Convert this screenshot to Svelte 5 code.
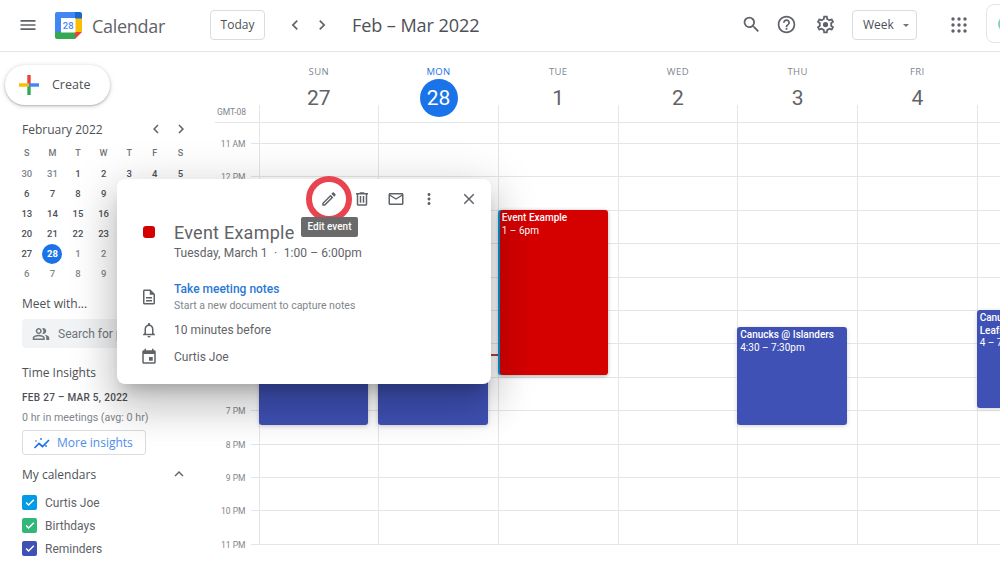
<script lang="ts">
  const ic = {
    menu: 'M3 18h18v-2H3v2zm0-5h18v-2H3v2zm0-7v2h18V6H3z',
    left: 'M15.41 7.41L14 6l-6 6 6 6 1.41-1.41L10.83 12z',
    right: 'M10 6L8.59 7.41 13.17 12l-4.58 4.59L10 18l6-6z',
    search: 'M15.5 14h-.79l-.28-.27A6.471 6.471 0 0 0 16 9.5 6.5 6.5 0 1 0 9.5 16c1.61 0 3.09-.59 4.23-1.57l.27.28v.79l5 4.99L20.49 19l-4.99-5zm-6 0C7.01 14 5 11.99 5 9.5S7.01 5 9.5 5 14 7.01 14 9.5 11.99 14 9.5 14z',
    help: 'M11 18h2v-2h-2v2zm1-16C6.48 2 2 6.48 2 12s4.48 10 10 10 10-4.48 10-10S17.52 2 12 2zm0 18c-4.41 0-8-3.59-8-8s3.59-8 8-8 8 3.59 8 8-3.59 8-8 8zm0-14c-2.21 0-4 1.79-4 4h2c0-1.1.9-2 2-2s2 .9 2 2c0 2-3 1.75-3 5h2c0-2.25 3-2.5 3-5 0-2.21-1.79-4-4-4z',
    gear: 'M19.43 12.98c.04-.32.07-.64.07-.98 0-.34-.03-.66-.07-.98l2.11-1.65c.19-.15.24-.42.12-.64l-2-3.46c-.09-.16-.26-.25-.44-.25-.06 0-.12.01-.17.03l-2.49 1c-.52-.4-1.08-.73-1.69-.98l-.38-2.65C14.46 2.18 14.25 2 14 2h-4c-.25 0-.46.18-.49.42l-.38 2.65c-.61.25-1.17.59-1.69.98l-2.49-1c-.06-.02-.12-.03-.18-.03-.17 0-.34.09-.43.25l-2 3.46c-.13.22-.07.49.12.64l2.11 1.65c-.04.32-.07.65-.07.98 0 .33.03.66.07.98l-2.11 1.65c-.19.15-.24.42-.12.64l2 3.46c.09.16.26.25.44.25.06 0 .12-.01.17-.03l2.49-1c.52.4 1.08.73 1.69.98l.38 2.65c.03.24.24.42.49.42h4c.25 0 .46-.18.49-.42l.38-2.65c.61-.25 1.17-.59 1.69-.98l2.49 1c.06.02.12.03.18.03.17 0 .34-.09.43-.25l2-3.46c.12-.22.07-.49-.12-.64l-2.11-1.65zm-1.98-1.71c.04.31.05.52.05.73 0 .21-.02.43-.05.73l-.14 1.13.89.7 1.08.84-.7 1.21-1.27-.51-1.04-.42-.9.68c-.43.32-.84.56-1.25.73l-1.06.43-.16 1.13-.2 1.35h-1.4l-.19-1.35-.16-1.13-1.06-.43c-.43-.18-.83-.41-1.23-.71l-.91-.7-1.06.43-1.27.51-.7-1.21 1.08-.84.89-.7-.14-1.13c-.03-.31-.05-.54-.05-.74s.02-.43.05-.73l.14-1.13-.89-.7-1.08-.84.7-1.21 1.27.51 1.04.42.9-.68c.43-.32.84-.56 1.25-.73l1.06-.43.16-1.13.2-1.35h1.39l.19 1.35.16 1.13 1.06.43c.43.18.83.41 1.23.71l.91.7 1.06-.43 1.27-.51.7 1.21-1.07.85-.89.7.14 1.13zM12 9a3 3 0 1 0 0 6 3 3 0 0 0 0-6z',
    edit: 'M3 17.25V21h3.75L17.81 9.94l-3.75-3.75L3 17.25zM5.92 19H5v-.92l9.06-9.06.92.92L5.92 19zM20.71 5.63l-2.34-2.34c-.2-.2-.45-.29-.71-.29s-.51.1-.7.29l-1.83 1.83 3.75 3.75 1.83-1.83c.39-.39.39-1.02 0-1.41z',
    trash: 'M15 4V3H9v1H4v2h1v13c0 1.1.9 2 2 2h10c1.1 0 2-.9 2-2V6h1V4h-5zm2 15H7V6h10v13zM9 8h2v9H9zm4 0h2v9h-2z',
    mail: 'M20 4H4c-1.1 0-2 .9-2 2v12c0 1.1.9 2 2 2h16c1.1 0 2-.9 2-2V6c0-1.1-.9-2-2-2zm0 14H4V8l8 5 8-5v10zm-8-7L4 6h16l-8 5z',
    more: 'M12 8c1.1 0 2-.9 2-2s-.9-2-2-2-2 .9-2 2 .9 2 2 2zm0 2c-1.1 0-2 .9-2 2s.9 2 2 2 2-.9 2-2-.9-2-2-2zm0 6c-1.1 0-2 .9-2 2s.9 2 2 2 2-.9 2-2-.9-2-2-2z',
    close: 'M19 6.41L17.59 5 12 10.59 6.41 5 5 6.41 10.59 12 5 17.59 6.41 19 12 13.41 17.59 19 19 17.59 13.41 12z',
    doc: 'M8 16h8v2H8zm0-4h8v2H8zm6-10H6c-1.1 0-2 .9-2 2v16c0 1.1.89 2 1.99 2H18c1.1 0 2-.9 2-2V8l-6-6zm4 18H6V4h7v5h5v11z',
    bell: 'M12 22c1.1 0 2-.9 2-2h-4c0 1.1.9 2 2 2zm6-6v-5c0-3.07-1.63-5.64-4.5-6.32V4c0-.83-.67-1.5-1.5-1.5s-1.5.67-1.5 1.5v.68C7.64 5.36 6 7.92 6 11v5l-2 2v1h16v-1l-2-2zm-2 1H8v-6c0-2.48 1.51-4.5 4-4.5s4 2.02 4 4.5v6z',
    event: 'M17 12h-5v5h5v-5zM16 1v2H8V1H6v2H5c-1.11 0-1.99.9-1.99 2L3 19c0 1.1.89 2 2 2h14c1.1 0 2-.9 2-2V5c0-1.1-.9-2-2-2h-1V1h-2zm3 18H5V8h14v11z',
    people: 'M16.67 13.13C18.04 14.06 19 15.32 19 17v3h4v-3c0-2.18-3.57-3.47-6.33-3.87zM15 12c2.21 0 4-1.79 4-4s-1.79-4-4-4c-.47 0-.91.1-1.33.24a5.98 5.98 0 0 1 0 7.52c.42.14.86.24 1.33.24zM9 12c2.21 0 4-1.79 4-4s-1.79-4-4-4-4 1.79-4 4 1.79 4 4 4zm0-6c1.1 0 2 .9 2 2s-.9 2-2 2-2-.9-2-2 .9-2 2-2zM9 13c-2.67 0-8 1.34-8 4v3h16v-3c0-2.66-5.33-4-8-4zm6 5H3v-.99C3.2 16.29 6.3 15 9 15s5.8 1.29 6 2V18z',
    up: 'M12 8l-6 6 1.41 1.41L12 10.83l4.59 4.58L18 14z',
    check: 'M9.5 17.2l-5-5 1.8-1.8 3.2 3.2 8.2-8.2 1.8 1.8z'
  };

  const miniHead = ['S', 'M', 'T', 'W', 'T', 'F', 'S'];
  const mini = [
    [30, 31, 1, 2, 3, 4, 5],
    [6, 7, 8, 9, 10, 11, 12],
    [13, 14, 15, 16, 17, 18, 19],
    [20, 21, 22, 23, 24, 25, 26],
    [27, 28, 1, 2, 3, 4, 5],
    [6, 7, 8, 9, 10, 11, 12]
  ];

  const hours = ['11 AM', '12 PM', '1 PM', '2 PM', '3 PM', '4 PM', '5 PM', '6 PM', '7 PM', '8 PM', '9 PM', '10 PM', '11 PM'];

  type Ev = { title?: string; time?: string; top: number; h: number; color: string; left?: number; w?: number; pad?: number };
  const days: { name: string; num: number; isToday?: boolean; events: Ev[] }[] = [
    { name: 'SUN', num: 27, events: [{ top: 204, h: 98, color: '#3f51b5' }] },
    { name: 'MON', num: 28, isToday: true, events: [{ top: 204, h: 98, color: '#3f51b5' }] },
    { name: 'TUE', num: 1, events: [
      { top: 87, h: 165, color: '#039be5' },
      { title: 'Event Example', time: '1 – 6pm', top: 87, h: 165, color: '#d50000', left: 1.4, w: 107.4, pad: 1.5 }
    ] },
    { name: 'WED', num: 2, events: [] },
    { name: 'THU', num: 3, events: [{ title: 'Canucks @ Islanders', time: '4:30 – 7:30pm', top: 204, h: 98, color: '#3f51b5' }] },
    { name: 'FRI', num: 4, events: [] },
    { name: 'SAT', num: 5, events: [{ title: 'Canucks @ Maple Leafs', time: '4 – 7pm', top: 187, h: 98, color: '#3f51b5' }] }
  ];

  const calendars = [
    { name: 'Curtis Joe', color: '#039be5' },
    { name: 'Birthdays', color: '#33b679' },
    { name: 'Reminders', color: '#3f51b5' }
  ];
</script>

{#snippet icon(d: string, size: number, color = '#5f6368')}
  <svg class="icon" width={size} height={size} viewBox="0 0 24 24" fill={color}><path {d} /></svg>
{/snippet}

<div class="app">
  <header class="top">
    <span class="menu">{@render icon(ic.menu, 20)}</span>
    <svg class="logo" width="27" height="27" viewBox="0 0 27 27">
      <path d="M2 0h21l1 6H6v15H0V2a2 2 0 0 1 2-2z" fill="#4285f4" />
      <path d="M20 0h5a2 2 0 0 1 2 2v5h-7z" fill="#1967d2" />
      <path d="M20 6.500h7V20h-7z" fill="#fbbc04" />
      <path d="M0 20h20v7H2a2 2 0 0 1-2-2z" fill="#34a853" />
      <path d="M20 20h7l-7 7z" fill="#ea4335" />
      <rect x="6" y="6.500" width="14.500" height="14" fill="#fff" />
      <text x="13.200" y="17" text-anchor="middle" font-size="9.500" font-weight="500" fill="#4285f4" font-family="Roboto, sans-serif">28</text>
    </svg>
    <span class="brand">Calendar</span>
    <button class="outline today-btn">Today</button>
    <span class="nav">{@render icon(ic.left, 20)}</span>
    <span class="nav second">{@render icon(ic.right, 20)}</span>
    <span class="range">Feb – Mar 2022</span>
    <span class="spacer"></span>
    <span class="tool t1">{@render icon(ic.search, 21)}</span>
    <span class="tool t2">{@render icon(ic.help, 21)}</span>
    <span class="tool t3">{@render icon(ic.gear, 21)}</span>
    <button class="outline week">Week <i class="caret"></i></button>
    <svg class="apps" width="16" height="16" viewBox="0 0 16 16" fill="#5f6368">
      {#each [2, 8, 14] as y}
        {#each [2, 8, 14] as x}
          <circle cx={x} cy={y} r="1.700" />
        {/each}
      {/each}
    </svg>
    <span class="account"><i></i></span>
  </header>

  <div class="body">
    <aside class="side">
      <button class="create">
        <svg width="22" height="22" viewBox="0 0 22 22">
          <rect x="9.300" y="1" width="3.400" height="10" fill="#ea4335" />
          <rect x="9.300" y="11" width="3.400" height="10" fill="#34a853" />
          <rect x="1" y="9.300" width="10" height="3.400" fill="#fbbc04" />
          <rect x="11" y="9.300" width="10" height="3.400" fill="#4285f4" />
        </svg>
        <span>Create</span>
      </button>

      <div class="mini-top">
        <span class="mini-title">February 2022</span>
        <span class="mini-nav">{@render icon(ic.left, 18)}{@render icon(ic.right, 18)}</span>
      </div>
      <div class="mini">
        {#each miniHead as h}<span class="wk">{h}</span>{/each}
        {#each mini as row, r}
          {#each row as d, c}
            <span class="d" class:off={(r === 0 && c < 2) || r >= 4 && (c > 1 || r === 5)} class:sel={r === 4 && c === 1}>{d}</span>
          {/each}
        {/each}
      </div>

      <h3 class="meet">Meet with...</h3>
      <div class="people">{@render icon(ic.people, 18, '#70757a')}<span>Search for people</span></div>

      <h3 class="insights">Time Insights</h3>
      <div class="period">FEB 27 – MAR 5, 2022</div>
      <div class="hrs">0 hr in meetings (avg: 0 hr)</div>
      <button class="more-btn">
        <svg width="18" height="18" viewBox="0 0 18 18" fill="none" stroke="#1a73e8" stroke-width="1.700">
          <path d="M1.500 14l4.500-4.500 3.500 3L16 6" />
          <circle cx="3" cy="7" r=".8" fill="#1a73e8" stroke="none" />
          <circle cx="8" cy="5" r=".9" fill="#1a73e8" stroke="none" />
          <circle cx="13" cy="12" r=".9" fill="#1a73e8" stroke="none" />
        </svg>
        <span>More insights</span>
      </button>

      <div class="mycal">
        <h3>My calendars</h3>
        {@render icon(ic.up, 18)}
      </div>
      <ul class="cals">
        {#each calendars as c}
          <li>
            <span class="box" style="background:{c.color}">{@render icon(ic.check, 14, '#fff')}</span>
            {c.name}
          </li>
        {/each}
      </ul>
    </aside>

    <main class="main">
      <div class="head">
        <div class="gmt">GMT-08</div>
        {#each days as day}
          <div class="dayhead" class:now-day={day.isToday}>
            <span class="dname">{day.name}</span>
            <span class="dnum">{day.num}</span>
          </div>
        {/each}
      </div>
      <div class="grid">
        <div class="gutter">
          {#each hours as h}
            <div class="slot"><span>{h}</span></div>
          {/each}
        </div>
        {#each days as day}
          <div class="col">
            {#each hours as h}<div class="cell"></div>{/each}
            {#if day.isToday}<div class="now"></div>{/if}
            {#each day.events as e}
              <div class="ev" style="top:{e.top}px;height:{e.h}px;background:{e.color};left:{e.left ?? -1}px;width:{e.w ?? 109.4}px;padding-left:{e.pad ?? 3}px">
                {#if e.title}<b>{e.title}</b><br />{e.time}{/if}
              </div>
            {/each}
          </div>
        {/each}
      </div>
    </main>
  </div>

  <section class="pop">
    <div class="pop-tools">
      <span class="pt edit">{@render icon(ic.edit, 18)}</span>
      <span class="pt">{@render icon(ic.trash, 18)}</span>
      <span class="pt">{@render icon(ic.mail, 18)}</span>
      <span class="pt">{@render icon(ic.more, 18)}</span>
      <span class="pt close">{@render icon(ic.close, 18)}</span>
      <span class="ring"></span>
      <span class="tip">Edit event</span>
    </div>
    <div class="pop-row first">
      <span class="pop-ic"><i class="swatch"></i></span>
      <div>
        <div class="ev-title">Event Example</div>
        <div class="ev-when">Tuesday, March 1 &nbsp;·&nbsp; 1:00 – 6:00pm</div>
      </div>
    </div>
    <div class="pop-row notes">
      <span class="pop-ic">{@render icon(ic.doc, 18)}</span>
      <div>
        <div class="link">Take meeting notes</div>
        <div class="sub">Start a new document to capture notes</div>
      </div>
    </div>
    <div class="pop-row line">
      <span class="pop-ic">{@render icon(ic.bell, 18)}</span>
      <span>10 minutes before</span>
    </div>
    <div class="pop-row line last">
      <span class="pop-ic">{@render icon(ic.event, 18)}</span>
      <span>Curtis Joe</span>
    </div>
  </section>
</div>

<style>
  :global(body) { margin: 0; background: #fff; }
  .app { position: relative; width: 1000px; height: 562px; overflow: hidden; display: flex; flex-direction: column; font-family: Roboto, "Liberation Sans", sans-serif; color: #4d5156; }
  .icon { display: block; flex: none; }
  button { font: inherit; padding: 0; cursor: pointer; background: #fff; }

  .top { height: 52px; flex: none; box-sizing: border-box; border-bottom: 1px solid #e3e5e7; display: flex; align-items: center; padding-left: 18px; }
  .menu { width: 20px; margin-right: 17px; margin-top: -1px; }
  .logo { flex: none; margin-top: -1px; }
  .brand { font: 400 18px "Open Sans", sans-serif; color: #5f6368; margin-left: 10px; width: 118px; letter-spacing: -.3px; }
  .outline { height: 30px; box-sizing: border-box; border: 1px solid #dadce0; border-radius: 4px; font: 500 12px "Open Sans", sans-serif; color: #4d5156; margin-top: -2px; }
  .today-btn { width: 55px; margin-right: 20px; }
  .nav { width: 20px; margin-right: 7px; margin-top: -2px; }
  .nav.second { margin-right: 20px; }
  .range { font: 400 18.100px "Open Sans", sans-serif; color: #4d5156; margin-top: -2px; letter-spacing: -.1px; }
  .spacer { flex: 1; }
  .tool { width: 21px; margin-top: -2px; }
  .t1 { margin-right: 14px; }
  .t2 { margin-right: 18px; }
  .t3 { margin-right: 16px; }
  .week { width: 65px; margin: -2px 34px 0 0; text-align: left; padding-left: 10px; position: relative; }
  .caret { position: absolute; right: 7px; top: 13px; border: 3.500px solid transparent; border-top-color: #70757a; border-bottom: 0; }
  .apps { flex: none; margin-right: 19px; margin-top: -2px; }
  .account { width: 40px; height: 39px; flex: none; box-sizing: border-box; border: 1px solid #e3e5e7; border-radius: 8px; margin: -4px -26px 0 0; padding: 11px; }
  .account i { display: block; width: 16px; height: 16px; border: 2px solid #81d4ae; border-radius: 50%; box-sizing: border-box; }

  .body { flex: 1; display: flex; min-height: 0; }
  .side { width: 215px; flex: none; box-sizing: border-box; padding: 13px 0 0 22px; position: relative; }
  .create { margin-left: -17px; width: 105px; height: 40px; border: 0; border-radius: 20px; background: #fff; box-shadow: 0 1px 2px rgba(60,64,67,.3), 0 1px 4px 1px rgba(60,64,67,.15); display: flex; align-items: center; gap: 12px; padding-left: 13px; }
  .create span { font: 500 12.500px "Open Sans", sans-serif; color: #4d5156; padding-bottom: 2px; }

  .mini-top { display: flex; align-items: center; justify-content: space-between; width: 168px; margin-top: 15px; height: 18px; }
  .mini-title { font: 500 12px "Open Sans", sans-serif; color: #4d5156; }
  .mini-nav { display: flex; gap: 7px; }
  .mini { display: grid; grid-template-columns: repeat(7, 25.6px); grid-auto-rows: 20px; width: 180px; margin: 6px 0 0 -8px; font-size: 9.500px; font-weight: 500; text-align: center; line-height: 20px; color: #4d5156; }
  .wk { color: #70757a; height: 19px; line-height: 18px; font-size: 9px; }
  .d.off { color: #80868b; }
  .d.sel { background: #1a73e8; color: #fff; width: 20px; height: 20px; border-radius: 50%; justify-self: center; font-weight: 700; }

  h3 { margin: 0; font: 500 12px "Open Sans", sans-serif; color: #4d5156; }
  .meet { margin-top: 11px; line-height: 18px; }
  .people { width: 175px; height: 29px; margin-top: 6px; background: #f1f3f4; border-radius: 4px; display: flex; align-items: center; gap: 8px; padding-left: 10px; box-sizing: border-box; font-size: 12px; color: #70757a; white-space: nowrap; }
  .insights { margin-top: 16px; line-height: 18px; }
  .period { margin-top: 9px; font-size: 10px; font-weight: 500; letter-spacing: .3px; color: #4d5156; line-height: 14px; }
  .hrs { margin-top: 6px; font-size: 10.700px; color: #80868b; line-height: 14px; }
  .more-btn { margin-top: 5px; width: 124px; height: 25px; border: 1px solid #dadce0; border-radius: 3px; display: flex; align-items: center; gap: 6px; padding-left: 10px; box-sizing: border-box; }
  .more-btn span { font: 500 12px "Open Sans", sans-serif; color: #1a73e8; opacity: .8; white-space: nowrap; }
  .mycal { margin-top: 10px; width: 166px; display: flex; justify-content: space-between; align-items: center; height: 18px; }
  .cals { list-style: none; margin: 8px 0 0; padding: 0; }
  .cals li { display: flex; align-items: center; gap: 8px; height: 23px; font-size: 12px; color: #5f6368; }
  .box { width: 15px; height: 15px; border-radius: 2px; display: flex; align-items: center; justify-content: center; }

  .main { flex: 1; min-width: 0; overflow: hidden; }
  .head { display: grid; grid-template-columns: 43.500px repeat(7, 119.700px); height: 71px; box-sizing: border-box; border-bottom: 1.500px solid #e3e5e7; }
  .gmt { align-self: end; font-size: 8.500px; color: #80868b; padding: 0 0 4px 2px; line-height: 12px; }
  .dayhead { position: relative; display: flex; flex-direction: column; align-items: center; padding: 14px 0 0 1px; }
  .dayhead::before { content: ''; position: absolute; left: 0; bottom: 0; height: 17px; border-left: 1px solid #e3e5e7; }
  .dname { font: 500 9.500px "Open Sans", sans-serif; letter-spacing: .4px; color: #80868b; line-height: 12px; }
  .dnum { width: 38px; height: 38px; border-radius: 50%; margin-top: 1px; display: flex; align-items: center; justify-content: center; font: 400 21px Roboto, sans-serif; color: #5f6368; }
  .now-day .dname { color: #1a73e8; }
  .now-day .dnum { background: #1a73e8; color: #fff; }

  .grid { display: grid; grid-template-columns: 43.500px repeat(7, 119.700px); }
  .slot { height: 33.400px; box-sizing: border-box; position: relative; }
  .slot:first-child, .cell:first-child { height: 21px; }
  .slot::after { content: ''; position: absolute; right: 0; bottom: 0; width: 8px; border-bottom: 1px solid #e3e5e7; }
  .slot span { position: absolute; right: 13px; bottom: -6px; font-size: 8.500px; line-height: 12px; color: #80868b; white-space: nowrap; }
  .col { position: relative; border-left: 1px solid #e3e5e7; }
  .cell { height: 33.400px; box-sizing: border-box; border-bottom: 1px solid #e3e5e7; }
  .now { position: absolute; left: 0; right: 0; top: 231px; height: 1.500px; background: #b0413e; }
  .ev { position: absolute; box-sizing: border-box; padding: 2px 2px; border-radius: 3px; color: #fff; font-size: 10px; line-height: 12.500px; overflow: hidden; box-shadow: 0 1px 4px rgba(0,0,0,.18); }
  .ev b { font-weight: 500; }

  .pop { position: absolute; left: 117px; top: 179px; width: 374px; height: 205px; background: #fff; border-radius: 8px; box-shadow: 0 24px 38px 3px rgba(0,0,0,.14), 0 9px 46px 8px rgba(0,0,0,.12), 0 11px 15px -7px rgba(0,0,0,.2); font-size: 12px; color: #5f6368; }
  .pop-tools { position: relative; height: 38px; display: flex; align-items: center; padding: 2px 0 0 203px; box-sizing: border-box; }
  .pt { width: 18px; margin-right: 15.400px; }
  .pt.close { margin-left: 6px; }
  .ring { position: absolute; left: 189px; top: -3px; width: 46px; height: 46px; box-sizing: border-box; border: 6px solid #e8434f; border-radius: 50%; }
  .tip { position: absolute; left: 184px; top: 38px; width: 57px; height: 20px; background: #6a6a6a; border-radius: 2px; color: #fff; font-size: 10px; font-weight: 500; line-height: 20px; text-align: center; }
  .pop-row { display: flex; align-items: flex-start; padding-left: 23px; }
  .pop-ic { width: 18px; margin-right: 16px; display: flex; justify-content: center; }
  .first { margin-top: 5px; }
  .swatch { width: 12px; height: 12px; margin-top: 4px; border-radius: 3px; background: #d50000; }
  .ev-title { font: 400 18px Roboto, sans-serif; letter-spacing: .25px; line-height: 22px; color: #5f6368; }
  .ev-when { margin-top: 1px; line-height: 16px; white-space: nowrap; word-spacing: .3px; }
  .notes { margin-top: 20px; align-items: center; }
  .link { color: #2b78d4; font-weight: 500; line-height: 16px; }
  .sub { margin-top: 2px; font-size: 10.500px; color: #80868b; line-height: 13px; }
  .line { align-items: center; height: 20px; margin-top: 8px; }
  .last { margin-top: 7px; }
</style>
